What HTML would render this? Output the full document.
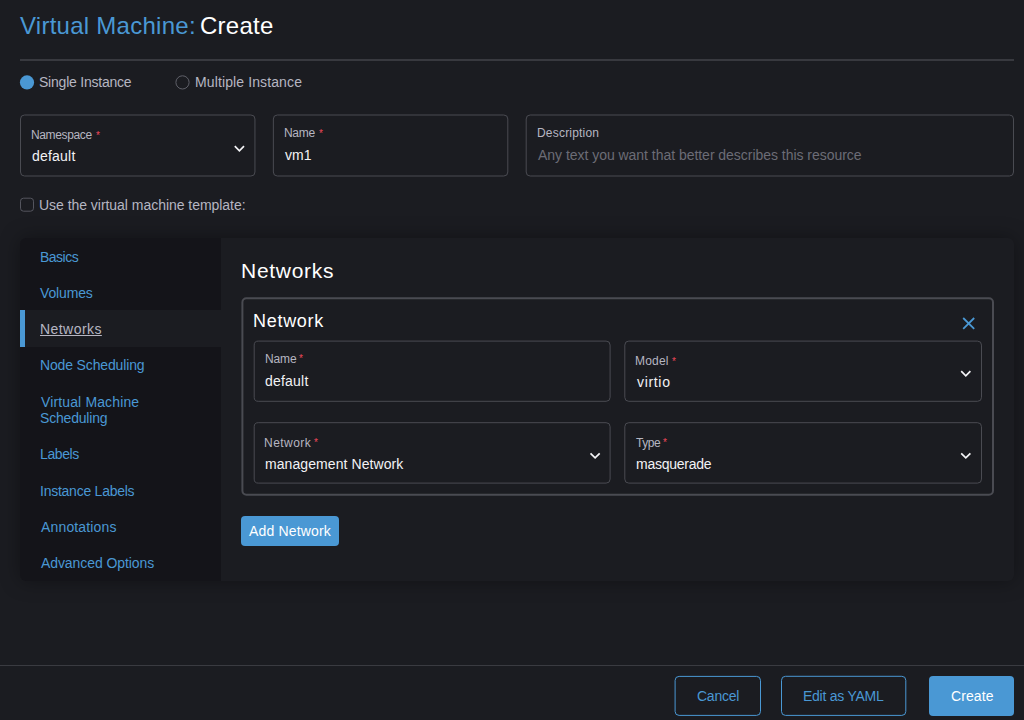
<!DOCTYPE html>
<html lang="en">
<head>
<meta charset="utf-8">
<title>Virtual Machine: Create</title>
<style>
*{box-sizing:border-box;margin:0;padding:0}
h1,h2,h3{font-weight:400;font-size:inherit}
html,body{width:1024px;height:720px;overflow:hidden;background:#1b1c21}
body{position:relative;font-family:"Liberation Sans",sans-serif;font-size:14px;color:#b6b6c2}
.t{position:absolute;white-space:nowrap;font-weight:400}
.hr{position:absolute;left:20px;top:59px;width:994px;height:2px;background:#38393f}
.tabs{position:absolute;left:20px;top:238px;width:994px;height:342.6px;border-radius:6px;box-shadow:0 0 20px rgba(0,0,0,.36);background:#1b1c21;overflow:hidden}
.side{position:absolute;left:0;top:0;width:201px;height:343px;background:#141419}
.act{position:absolute;left:0;top:72px;width:201px;height:37px;background:#1b1c21;border-left:5px solid #4a98d4}
.btn{position:absolute;background:#4a98d4;border-radius:4px}
.fl{position:absolute;left:0;top:665px;width:1024px;height:1px;background:#3a3b41}
svg.ov{position:absolute;left:0;top:0;width:1024px;height:720px;pointer-events:none}
</style>
</head>
<body>
<header>
<h1>
<span class="t" style="left:20px;top:10.5px;font-size:24px;line-height:30px;letter-spacing:0.260px;color:#4a98d4;">Virtual Machine:</span>
<span class="t" style="left:200px;top:10.5px;font-size:24px;line-height:30px;letter-spacing:0.260px;color:#ffffff;">Create</span>
</h1>
<div class="hr"></div>
</header>
<form>
<div role="radiogroup">
<span class="t" style="left:39px;top:72.0px;font-size:14px;line-height:20px;letter-spacing:-0.222px;color:#b6b6c2;">Single Instance</span>
<span class="t" style="left:195px;top:72.0px;font-size:14px;line-height:20px;letter-spacing:0.117px;color:#b6b6c2;">Multiple Instance</span>
</div>
<div class="fields">
<span class="t" style="left:31px;top:126.0px;font-size:12px;line-height:18px;letter-spacing:-0.363px;color:#b6b6c2;">Namespace</span>
<span class="t" style="left:32px;top:146.0px;font-size:14px;line-height:20px;letter-spacing:0.218px;color:#f2f2f5;">default</span>
<span class="t" style="left:284px;top:124.0px;font-size:12px;line-height:18px;letter-spacing:-0.299px;color:#b6b6c2;">Name</span>
<span class="t" style="left:285px;top:145.0px;font-size:14px;line-height:20px;letter-spacing:0.030px;color:#f2f2f5;">vm1</span>
<span class="t" style="left:537px;top:124.0px;font-size:12px;line-height:18px;letter-spacing:0.200px;color:#b6b6c2;">Description</span>
<span class="t" style="left:538px;top:145.0px;font-size:14px;line-height:20px;letter-spacing:-0.032px;color:#6c6c76;">Any text you want that better describes this resource</span>
<span class="t" style="left:96px;top:127.5px;font-size:10px;line-height:16px;color:#f0485a">*</span>
<span class="t" style="left:319px;top:125.5px;font-size:10px;line-height:16px;color:#f0485a">*</span>
</div>
<label>
<span class="t" style="left:39px;top:195.0px;font-size:14px;line-height:20px;letter-spacing:-0.036px;color:#b6b6c2;">Use the virtual machine template:</span>
</label>
</form>
<div class="tabs"><div class="side"><div class="act"></div></div></div>
<nav>
<span class="t" style="left:40px;top:247.0px;font-size:14px;line-height:20px;letter-spacing:-0.513px;color:#4a98d4;">Basics</span>
<span class="t" style="left:40px;top:283.0px;font-size:14px;line-height:20px;letter-spacing:-0.147px;color:#4a98d4;">Volumes</span>
<span class="t" style="left:40px;top:319.0px;font-size:14px;line-height:20px;letter-spacing:0.441px;color:#b6b6c2;text-decoration:underline;">Networks</span>
<span class="t" style="left:40px;top:355.0px;font-size:14px;line-height:20px;letter-spacing:-0.147px;color:#4a98d4;">Node Scheduling</span>
<span class="t" style="left:41px;top:392.0px;font-size:14px;line-height:20px;letter-spacing:0.132px;color:#4a98d4;">Virtual Machine</span>
<span class="t" style="left:40px;top:408.0px;font-size:14px;line-height:20px;letter-spacing:-0.186px;color:#4a98d4;">Scheduling</span>
<span class="t" style="left:40px;top:444.0px;font-size:14px;line-height:20px;letter-spacing:-0.383px;color:#4a98d4;">Labels</span>
<span class="t" style="left:40px;top:481.0px;font-size:14px;line-height:20px;letter-spacing:-0.246px;color:#4a98d4;">Instance Labels</span>
<span class="t" style="left:41px;top:517.0px;font-size:14px;line-height:20px;letter-spacing:0.155px;color:#4a98d4;">Annotations</span>
<span class="t" style="left:41px;top:553.0px;font-size:14px;line-height:20px;letter-spacing:-0.084px;color:#4a98d4;">Advanced Options</span>
</nav>
<main>
<h2>
<span class="t" style="left:241px;top:257.0px;font-size:21px;line-height:27px;letter-spacing:0.714px;color:#ffffff;">Networks</span>
</h2>
<section>
<h3>
<span class="t" style="left:253px;top:309.0px;font-size:18px;line-height:24px;letter-spacing:0.716px;color:#ffffff;">Network</span>
</h3>

<span class="t" style="left:265px;top:350.0px;font-size:12px;line-height:18px;letter-spacing:-0.117px;color:#b6b6c2;">Name</span>
<span class="t" style="left:265px;top:371.0px;font-size:14px;line-height:20px;letter-spacing:0.218px;color:#f2f2f5;">default</span>
<span class="t" style="left:635px;top:352.0px;font-size:12px;line-height:18px;letter-spacing:0.194px;color:#b6b6c2;">Model</span>
<span class="t" style="left:637px;top:372.0px;font-size:14px;line-height:20px;letter-spacing:0.674px;color:#f2f2f5;">virtio</span>
<span class="t" style="left:264px;top:434.0px;font-size:12px;line-height:18px;letter-spacing:0.460px;color:#b6b6c2;">Network</span>
<span class="t" style="left:265px;top:454.0px;font-size:14px;line-height:20px;letter-spacing:0.080px;color:#f2f2f5;">management Network</span>
<span class="t" style="left:636px;top:434.0px;font-size:12px;line-height:18px;letter-spacing:-0.416px;color:#b6b6c2;">Type</span>
<span class="t" style="left:636px;top:454.0px;font-size:14px;line-height:20px;letter-spacing:-0.260px;color:#f2f2f5;">masquerade</span>
<span class="t" style="left:299px;top:350.5px;font-size:10px;line-height:16px;color:#f0485a">*</span>
<span class="t" style="left:672px;top:353.5px;font-size:10px;line-height:16px;color:#f0485a">*</span>
<span class="t" style="left:314px;top:434.5px;font-size:10px;line-height:16px;color:#f0485a">*</span>
<span class="t" style="left:663px;top:434.5px;font-size:10px;line-height:16px;color:#f0485a">*</span>

</section>
<div class="btn" role="button" style="left:241.4px;top:515.8px;width:97.2px;height:30.2px"></div>

<span class="t" style="left:249px;top:521.0px;font-size:14px;line-height:20px;letter-spacing:0.161px;color:#ffffff;">Add Network</span>

</main>
<footer>
<div class="fl"></div>
<div class="btn" role="button" style="left:929.4px;top:675.8px;width:84.8px;height:40.1px"></div>

<span class="t" style="left:697px;top:686.0px;font-size:14px;line-height:20px;letter-spacing:-0.236px;color:#4a98d4;">Cancel</span>
<span class="t" style="left:803px;top:686.0px;font-size:14px;line-height:20px;letter-spacing:-0.256px;color:#4a98d4;">Edit as YAML</span>
<span class="t" style="left:951px;top:686.0px;font-size:14px;line-height:20px;letter-spacing:0.102px;color:#ffffff;">Create</span>

</footer>
<svg class="ov" viewBox="0 0 1024 720">
<rect x="20.50" y="115.00" width="234.45" height="61.00" rx="4" ry="4" fill="none" stroke="#4a4b52" stroke-width="1"/>
<rect x="273.35" y="115.00" width="234.45" height="61.00" rx="4" ry="4" fill="none" stroke="#4a4b52" stroke-width="1"/>
<rect x="526.20" y="115.00" width="487.30" height="61.00" rx="4" ry="4" fill="none" stroke="#4a4b52" stroke-width="1"/>
<rect x="242.40" y="298.30" width="750.60" height="196.50" rx="4" ry="4" fill="none" stroke="#4a4b52" stroke-width="2"/>
<rect x="254.20" y="341.10" width="355.90" height="60.20" rx="4" ry="4" fill="none" stroke="#4a4b52" stroke-width="1"/>
<rect x="624.80" y="341.10" width="356.70" height="60.20" rx="4" ry="4" fill="none" stroke="#4a4b52" stroke-width="1"/>
<rect x="254.20" y="422.70" width="355.90" height="60.40" rx="4" ry="4" fill="none" stroke="#4a4b52" stroke-width="1"/>
<rect x="624.80" y="422.70" width="356.70" height="60.40" rx="4" ry="4" fill="none" stroke="#4a4b52" stroke-width="1"/>
<path d="M234.80 146.20 L239.40 150.80 L244.00 146.20" fill="none" stroke="#f4f4f7" stroke-width="1.7" stroke-linecap="butt" stroke-linejoin="miter"/>
<path d="M961.20 371.20 L965.80 375.80 L970.40 371.20" fill="none" stroke="#f4f4f7" stroke-width="1.7" stroke-linecap="butt" stroke-linejoin="miter"/>
<path d="M590.50 453.30 L595.10 457.90 L599.70 453.30" fill="none" stroke="#f4f4f7" stroke-width="1.7" stroke-linecap="butt" stroke-linejoin="miter"/>
<path d="M961.20 453.30 L965.80 457.90 L970.40 453.30" fill="none" stroke="#f4f4f7" stroke-width="1.7" stroke-linecap="butt" stroke-linejoin="miter"/>
<path d="M963.2 318 L974.2 328.8 M974.2 318 L963.2 328.8" fill="none" stroke="#4a98d4" stroke-width="1.8" stroke-linecap="butt"/>
<circle cx="182.5" cy="82.4" r="6.6" fill="none" stroke="#5f6069" stroke-width="1"/>
<circle cx="27" cy="82.4" r="7.1" fill="#4a98d4"/>
<rect x="20.50" y="198.20" width="13.00" height="13.00" rx="3" ry="3" fill="none" stroke="#54555e" stroke-width="1"/>
<rect x="675.10" y="676.40" width="85.40" height="39.00" rx="4" ry="4" fill="none" stroke="#4a98d4" stroke-width="1"/>
<rect x="781.50" y="676.30" width="124.30" height="39.10" rx="4" ry="4" fill="none" stroke="#4a98d4" stroke-width="1"/>
</svg>
</body>
</html>
